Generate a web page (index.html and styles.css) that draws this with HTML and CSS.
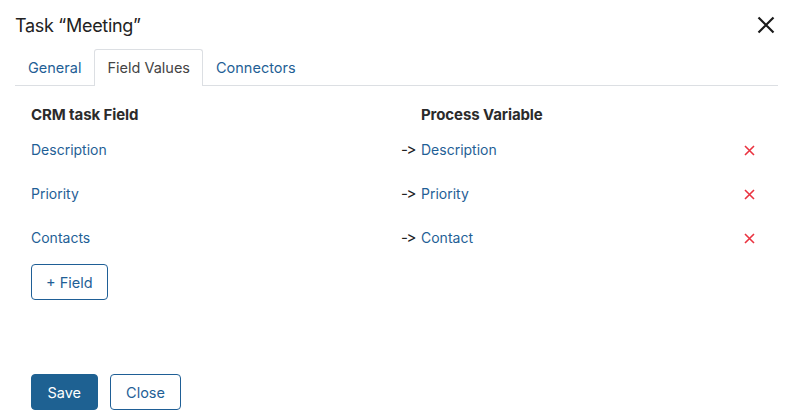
FILE: index.html
```html
<!DOCTYPE html>
<html>
<head>
<meta charset="utf-8">
<link rel="stylesheet" href="styles.css">
</head>
<body>
<div class="dialog">
  <div class="header">
    <div class="title">Task “Meeting”</div>
    <button class="close-x" aria-label="Close">
      <svg width="18" height="18" viewBox="0 0 18 18"><path d="M1.5 1.5L16.5 16.5M16.5 1.5L1.5 16.5" stroke="#1a1a1a" stroke-width="2.2" fill="none"/></svg>
    </button>
  </div>
  <div class="tabs">
    <div class="tab">General</div>
    <div class="tab active">Field Values</div>
    <div class="tab">Connectors</div>
  </div>
  <div class="content">
    <div class="grid head">
      <div class="c1">CRM task Field</div>
      <div class="c2"></div>
      <div class="c3">Process Variable</div>
      <div class="c4"></div>
    </div>
    <div class="rows">
      <div class="grid row">
        <div class="c1 link">Description</div>
        <div class="c2 arrow">-&gt;</div>
        <div class="c3 link">Description</div>
        <div class="c4"><svg class="del" width="11" height="11" viewBox="0 0 11 11"><path d="M1 1L10 10M10 1L1 10" stroke="#ea3340" stroke-width="1.6" fill="none"/></svg></div>
      </div>
      <div class="grid row">
        <div class="c1 link">Priority</div>
        <div class="c2 arrow">-&gt;</div>
        <div class="c3 link">Priority</div>
        <div class="c4"><svg class="del" width="11" height="11" viewBox="0 0 11 11"><path d="M1 1L10 10M10 1L1 10" stroke="#ea3340" stroke-width="1.6" fill="none"/></svg></div>
      </div>
      <div class="grid row">
        <div class="c1 link">Contacts</div>
        <div class="c2 arrow">-&gt;</div>
        <div class="c3 link">Contact</div>
        <div class="c4"><svg class="del" width="11" height="11" viewBox="0 0 11 11"><path d="M1 1L10 10M10 1L1 10" stroke="#ea3340" stroke-width="1.6" fill="none"/></svg></div>
      </div>
    </div>
    <button class="btn outline add">+ Field</button>
  </div>
  <div class="footer">
    <button class="btn primary">Save</button>
    <button class="btn outline">Close</button>
  </div>
</div>
</body>
</html>
```
FILE: styles.css
```css
* { box-sizing: border-box; }
html, body { margin: 0; padding: 0; background: #fff; }
body {
  font-family: Inter, "Noto Sans", sans-serif;
  color: #222;
  width: 791px;
  height: 417px;
  overflow: hidden;
}
.dialog { padding: 0 13px 0 15px; }
.header {
  display: flex;
  align-items: center;
  justify-content: space-between;
  height: 49px;
  padding-top: 1px;
}
.title { font-size: 18px; color: #222; letter-spacing: -0.3px; }
.close-x {
  border: 0; background: none; padding: 0; margin-right: 3px;
  width: 18px; height: 18px; display: flex;
}
.tabs {
  display: flex;
  border-bottom: 1px solid #dcdfe3;
  height: 37px;
}
.tab {
  padding: 0 12px;
  height: 36px;
  line-height: 36px;
  font-size: 14.5px;
  color: #1f5f96;
  border: 1px solid transparent;
  border-bottom: 0;
  border-radius: 3px 3px 0 0;
  margin-bottom: -1px;
}
.tab.active {
  color: #444;
  border-color: #dcdfe3;
  background: #fff;
  height: 37px;
}
.content { padding: 19px 0 0 16px; }
.grid {
  display: grid;
  grid-template-columns: 370px 20px 1fr 34px;
  align-items: center;
  line-height: 20px;
  font-size: 14px;
}
.head { font-weight: 700; font-size: 15px; color: #2b2b2b; letter-spacing: -0.1px; }
.rows { margin-top: 3px; }
.row { padding: 12px 0; }
.link { color: #1f5f96; }
.arrow { color: #222; font-size: 15px; letter-spacing: -1.5px; }
.c4 { display: flex; justify-content: flex-start; }
.del { display: block; margin-top: 1px; }
.btn {
  font-family: inherit;
  font-size: 14.5px;
  height: 36px;
  border-radius: 4px;
  padding: 0 15.5px;
  cursor: pointer;
}
.btn.outline {
  background: #fff;
  color: #1f5f96;
  border: 1px solid #1f5f96;
}
.btn.primary {
  background: #1e6192;
  color: #fff;
  border: 1px solid #1e6192;
}
.add { margin-top: 4px; padding: 0 14px; }
.footer {
  display: flex;
  gap: 12px;
  padding-left: 16px;
  margin-top: 74px;
}
```
